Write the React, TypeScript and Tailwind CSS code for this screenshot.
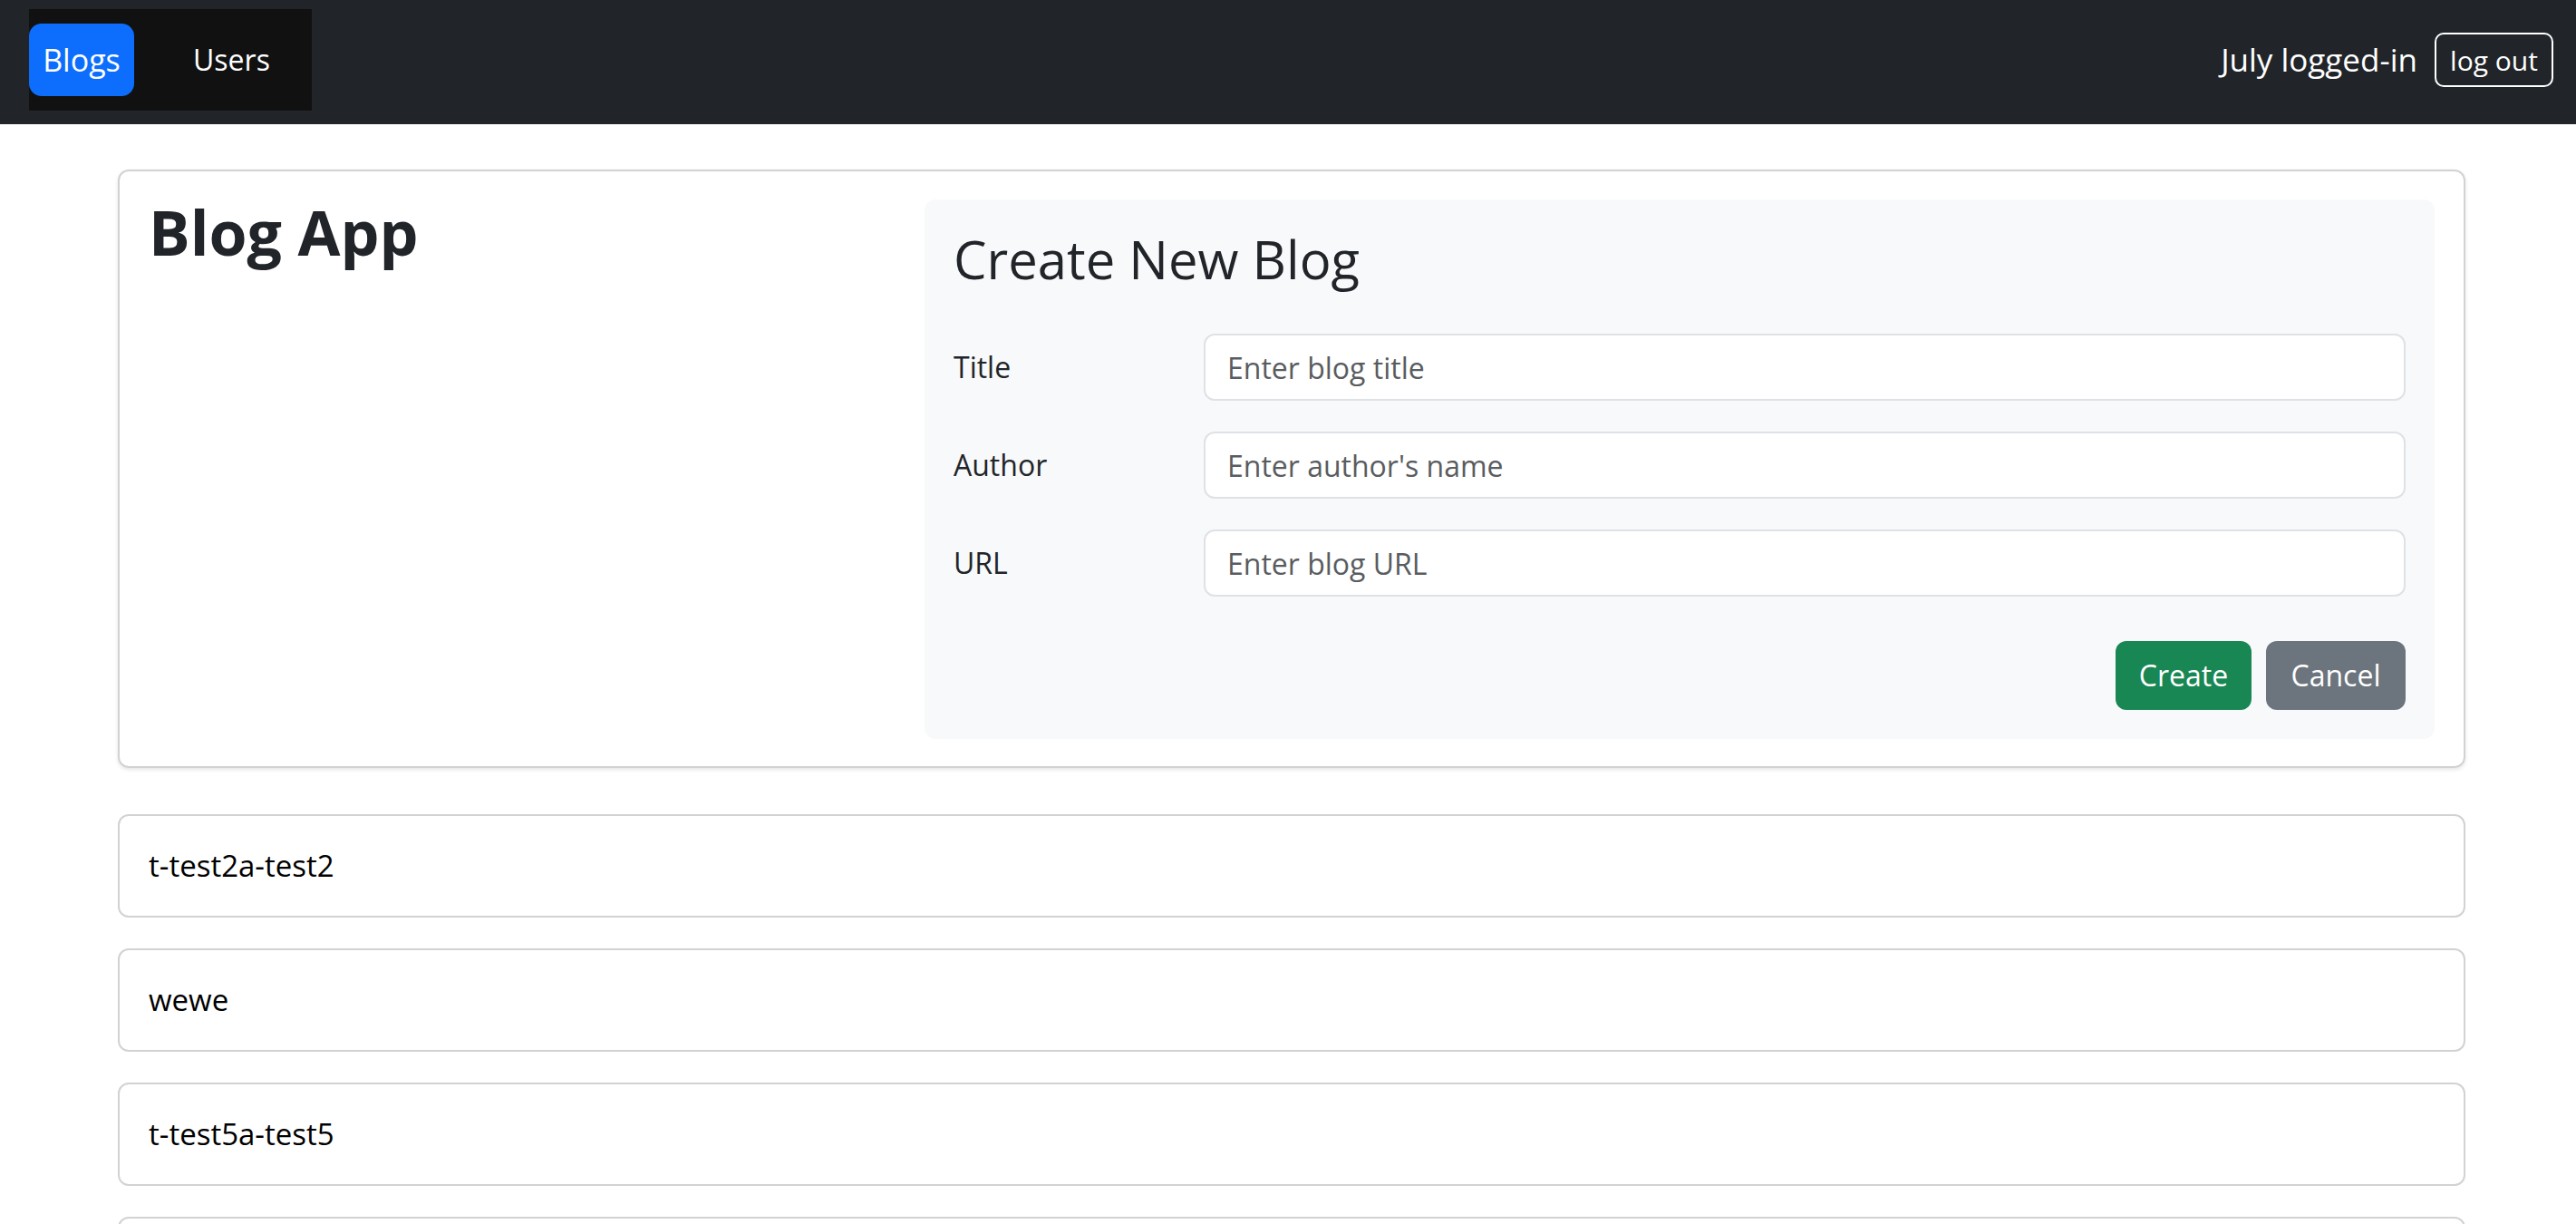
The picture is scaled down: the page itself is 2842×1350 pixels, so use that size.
import React from 'react';

const blogs = ['t-test2a-test2', 'wewe', 't-test5a-test5'];

const fields = [
  { label: 'Title', placeholder: 'Enter blog title' },
  { label: 'Author', placeholder: "Enter author's name" },
  { label: 'URL', placeholder: 'Enter blog URL' },
];

const NavBar: React.FC = () => (
  <nav className="h-[137px] bg-[#212529] flex items-start justify-between pl-[32px] pr-[25px]">
    <div className="mt-[10px] h-[112px] w-[312px] bg-[#111111] flex items-start pt-[16px]">
      <a className="h-[80px] w-[116px] rounded-[14px] bg-[#0d6efd] text-white text-[34px] flex items-center justify-center">
        Blogs
      </a>
      <a className="h-[80px] ml-[48px] px-[17px] text-white text-[32px] flex items-center">Users</a>
    </div>
    <div className="h-full flex items-center gap-[19px] pb-[5px]">
      <span className="text-white text-[35px]">July logged-in</span>
      <button className="h-[60px] w-[131px] border-2 border-white rounded-[10px] text-white text-[30px] flex items-center justify-center">
        log out
      </button>
    </div>
  </nav>
);

const CreateForm: React.FC = () => (
  <div className="flex-1 bg-[#f8f9fa] rounded-[12px] p-[32px]">
    <h3 className="text-[58px] leading-[67px] font-normal text-[#212529] mb-[49px]">Create New Blog</h3>
    <div className="flex flex-col gap-[34px]">
      {fields.map(f => (
        <div key={f.label} className="flex items-center">
          <label className="w-[276px] shrink-0 text-[32px] text-[#212529]">{f.label}</label>
          <input
            type="text"
            placeholder={f.placeholder}
            className="flex-1 h-[74px] bg-white border-2 border-[#dee2e6] rounded-[12px] px-[24px] text-[32px] placeholder:text-[#595c5f] outline-none"
          />
        </div>
      ))}
    </div>
    <div className="flex justify-end gap-[16px] mt-[49px]">
      <button className="w-[150px] h-[76px] rounded-[12px] bg-[#198754] text-white text-[32px]">Create</button>
      <button className="w-[154px] h-[76px] rounded-[12px] bg-[#6c757d] text-white text-[32px]">Cancel</button>
    </div>
  </div>
);

export default function App() {
  return (
    <div className="min-h-screen bg-white font-['Open_Sans',sans-serif] text-[#212529]">
      <NavBar />
      <main className="ml-[130px] w-[2590px] pt-[50px] pb-[40px]">
        <div className="border-2 border-[#d2d2d2] rounded-[12px] shadow-[0_2px_4px_rgba(0,0,0,0.1)] pt-[31px] pb-[30px] px-[32px] flex gap-[48px]">
          <div className="w-[808px] shrink-0">
            <h1 className="text-[68px] leading-[71px] font-bold text-[#212529]">Blog App</h1>
          </div>
          <CreateForm />
        </div>

        <div className="mt-[51px] flex flex-col gap-[34px]">
          {blogs.map(b => (
            <div
              key={b}
              className="h-[114px] border-2 border-[#d2d2d2] rounded-[12px] px-[32px] flex items-center text-[33px] text-black"
            >
              {b}
            </div>
          ))}
          {/* next entry, only its top edge is in view */}
          <div className="h-[114px] border-2 border-[#d2d2d2] rounded-[12px]" />
        </div>
      </main>
    </div>
  );
}
